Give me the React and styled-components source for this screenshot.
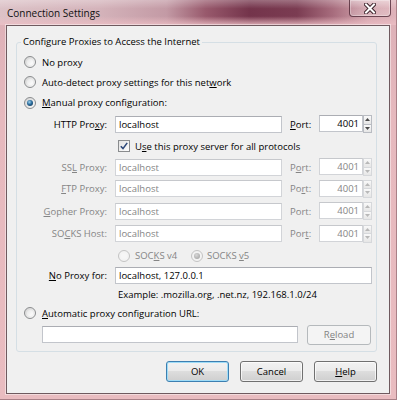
import React from 'react';
import styled, { createGlobalStyle } from 'styled-components';

const Global = createGlobalStyle`
  html, body { margin: 0; padding: 0; background: #fff; }
  body { font-family: "Open Sans", "Noto Sans", sans-serif; font-size: 9.5px; color: #000; }
`;

const Window = styled.div`
  width: 397px;
  height: 400px;
  box-sizing: border-box;
  display: flex;
  flex-direction: column;
  padding: 0 6px 5px 6px;
  background: linear-gradient(180deg, #dcb0b7 0%, #e6b9be 30%, #e9bcc0 100%);
  border-right: 1px solid #a98087;
  border-bottom: 1px solid #a98087;
`;

const TitleBar = styled.div`
  height: 25px;
  margin: 0 -6px;
  padding: 0 5px 0 7px;
  display: flex;
  align-items: flex-start;
  background:
    linear-gradient(180deg, rgba(255,255,255,.28) 0%, rgba(255,255,255,0) 35%, rgba(255,255,255,0) 65%, rgba(236,190,196,.85) 100%),
    linear-gradient(90deg, #dcc2c7 0%, #d4b3ba 25%, #c39aa5 42%, #98596c 52%, #74344b 63%, #7b3c52 75%, #a76c7d 84%, #d4a6af 93%, #dfb3ba 100%);
`;

const Title = styled.div`
  font-size: 10px;
  line-height: 14px;
  padding-top: 6px;
  color: #111;
`;

const CloseButton = styled.div`
  margin-left: auto;
  width: 42px;
  height: 17px;
  box-sizing: border-box;
  border: 1px solid rgba(70, 30, 45, .75);
  border-top: none;
  border-radius: 0 0 4px 4px;
  background: linear-gradient(180deg, rgba(255,255,255,.25), rgba(255,255,255,.08) 50%, rgba(255,255,255,.18));
  box-shadow: inset 0 0 0 1px rgba(255,255,255,.3);
  display: flex;
  align-items: center;
  justify-content: center;
`;

const Client = styled.div`
  flex: 1;
  background: #f0f0f0;
  border: 1px solid #6f5a5f;
  box-shadow: 0 0 0 1px rgba(255,255,255,.45);
  padding-top: 9px;
  display: flex;
  flex-direction: column;
`;

const Group = styled.fieldset`
  margin: 0 12px 0 9px;
  padding: 0;
  border: 1px solid #d5dfe5;
  border-radius: 3px;
  min-width: 0;
`;

const Legend = styled.legend`
  margin-left: 4px;
  padding: 0 2px;
  height: 14px;
  line-height: 14px;
`;

const Body = styled.div`
  display: grid;
  grid-template-rows: 20px 20px 21px 22px 22px 20px 23px 22px 23px 21px 19px 18px 20px 23px;
  padding: 3px 0 5px;
`;

const Line = styled.div`
  display: flex;
  align-items: center;
  padding-left: ${p => p.$indent || 0}px;
  color: ${p => (p.$disabled ? '#858585' : '#000')};
`;

const ProxyRow = styled.div`
  display: grid;
  grid-template-columns: 98px 175px 29px 53px;
  align-items: center;
  color: ${p => (p.$disabled ? '#858585' : '#000')};
`;

const Label = styled.span`
  text-align: right;
  padding-right: 8px;
  white-space: nowrap;
`;

const PortLabel = styled.span`
  white-space: nowrap;
`;

const Field = styled.div`
  box-sizing: border-box;
  height: 17px;
  width: ${p => p.$width}px;
  border: 1px solid ${p => (p.$disabled ? '#d2d4d8' : '#c2c5cb')};
  border-top-color: ${p => (p.$disabled ? '#c6c8cc' : '#abadb3')};
  background: #fff;
  color: ${p => (p.$disabled ? '#858585' : '#000')};
  padding: 0 3px;
  line-height: 15px;
  white-space: nowrap;
  overflow: hidden;
  text-align: ${p => (p.$right ? 'right' : 'left')};
  grid-column: ${p => p.$span || 'auto'};
`;

const PortBox = styled.div`
  display: flex;
  height: 18px;
`;

const Spinner = styled.div`
  width: 9px;
  display: flex;
  flex-direction: column;
`;

const SpinHalf = styled.div`
  flex: 1;
  box-sizing: border-box;
  border: 1px solid ${p => (p.$disabled ? '#d6d8db' : '#b9bcc2')};
  border-top: ${p => (p.$bottom ? 'none' : undefined)};
  background: linear-gradient(180deg, #f9f9f9, #e6e6e6);
  display: flex;
  align-items: center;
  justify-content: center;
`;

const Radio = styled.span`
  position: relative;
  flex: none;
  width: 12px;
  height: 12px;
  box-sizing: border-box;
  border-radius: 50%;
  border: 1px solid ${p => (p.$disabled ? '#c3c3c3' : '#8a8c8e')};
  background: ${p => (p.$disabled ? '#f3f3f3' : 'linear-gradient(135deg, #d4d4d4, #fafafa)')};
  &::after {
    content: '';
    position: absolute;
    inset: 2px;
    border-radius: 50%;
    background: ${p =>
      p.$checked
        ? p.$disabled
          ? 'radial-gradient(circle at 40% 35%, #d8d8d8, #9c9c9c)'
          : 'radial-gradient(circle at 40% 35%, #9fd3ef 0%, #2b6c9c 45%, #0d2a45 100%)'
        : p.$disabled
          ? '#f6f6f6'
          : 'linear-gradient(135deg, #e6e6e6, #ffffff)'};
  }
`;

const RadioText = styled.span`
  margin-left: ${p => p.$gap || 6}px;
  white-space: nowrap;
`;

const Option = styled.span`
  display: flex;
  align-items: center;
  width: ${p => (p.$width ? `${p.$width}px` : 'auto')};
`;

const Check = styled.span`
  flex: none;
  width: 12px;
  height: 12px;
  box-sizing: border-box;
  border: 1px solid #8a8c8e;
  background: linear-gradient(135deg, #e2e2e2, #fdfdfd);
  display: flex;
  align-items: center;
  justify-content: center;
`;

const Cell = styled.div`
  grid-column: ${p => p.$col};
  padding-left: ${p => p.$indent || 0}px;
  display: flex;
  align-items: center;
`;

const UrlRow = styled.div`
  display: flex;
  align-items: center;
  padding-left: 25px;
  gap: 9px;
`;

const Buttons = styled.div`
  display: flex;
  justify-content: flex-end;
  gap: 11px;
  margin-top: 9px;
  padding-right: 12px;
`;

const Button = styled.div`
  width: ${p => p.$width || 63}px;
  height: ${p => p.$height || 21}px;
  box-sizing: border-box;
  border-radius: 3px;
  border: 1px solid ${p => (p.$disabled ? '#b5b9bc' : p.$default ? '#3c7fb1' : '#707070')};
  background: ${p =>
    p.$disabled
      ? '#f4f4f4'
      : 'linear-gradient(180deg, #f2f2f2 0%, #ebebeb 45%, #dddddd 50%, #cfcfcf 100%)'};
  box-shadow: inset 0 0 0 1px ${p => (p.$disabled ? 'transparent' : p.$default ? '#9fdcf7' : 'rgba(255,255,255,.7)')};
  color: ${p => (p.$disabled ? '#838383' : '#000')};
  display: flex;
  align-items: center;
  justify-content: center;
`;

const Key = styled.span`
  text-decoration: underline;
  text-underline-offset: 1px;
`;

function CloseIcon() {
  return (
    <svg width="12" height="11" viewBox="0 0 12 11">
      <path d="M2 1.5 L10 9.5 M10 1.5 L2 9.5" stroke="#3b2129" strokeWidth="4" strokeLinecap="square" />
      <path d="M2 1.5 L10 9.5 M10 1.5 L2 9.5" stroke="#ffffff" strokeWidth="2" strokeLinecap="square" />
    </svg>
  );
}

function CheckMark() {
  return (
    <svg width="8" height="8" viewBox="0 0 8 8">
      <path d="M0.8 4.2 L3 6.6 L7.2 0.9" fill="none" stroke="#2c4779" strokeWidth="1.6" />
    </svg>
  );
}

function Arrow({ up, disabled }) {
  return (
    <svg width="5" height="3" viewBox="0 0 5 3">
      <path d={up ? 'M0 3 L2.5 0 L5 3 Z' : 'M0 0 L5 0 L2.5 3 Z'} fill={disabled ? '#b8b8b8' : '#4a4a4a'} />
    </svg>
  );
}

function Port({ disabled }) {
  return (
    <PortBox>
      <Field $width={44} $right $disabled={disabled}>4001</Field>
      <Spinner>
        <SpinHalf $disabled={disabled}><Arrow up disabled={disabled} /></SpinHalf>
        <SpinHalf $bottom $disabled={disabled}><Arrow disabled={disabled} /></SpinHalf>
      </Spinner>
    </PortBox>
  );
}

function Proxy({ label, port, disabled }) {
  return (
    <ProxyRow $disabled={disabled}>
      <Label>{label}</Label>
      <Field $width={167} $disabled={disabled}>localhost</Field>
      <PortLabel>{port}</PortLabel>
      <Port disabled={disabled} />
    </ProxyRow>
  );
}

export default function App() {
  return (
    <>
      <Global />
      <Window>
        <TitleBar>
          <Title>Connection Settings</Title>
          <CloseButton><CloseIcon /></CloseButton>
        </TitleBar>
        <Client>
          <Group>
            <Legend>Configure Proxies to Access the Internet</Legend>
            <Body>
              <Line $indent={7}><Radio /><RadioText>No proxy</RadioText></Line>
              <Line $indent={7}><Radio /><RadioText>Auto-detect proxy settings for this net<Key>w</Key>ork</RadioText></Line>
              <Line $indent={7}><Radio $checked /><RadioText><Key>M</Key>anual proxy configuration:</RadioText></Line>
              <Proxy label={<>HTTP Pro<Key>x</Key>y:</>} port={<><Key>P</Key>ort:</>} />
              <ProxyRow>
                <Cell $col="2 / 5" $indent={3}>
                  <Check><CheckMark /></Check>
                  <RadioText $gap={5}>U<Key>s</Key>e this proxy server for all protocols</RadioText>
                </Cell>
              </ProxyRow>
              <Proxy disabled label={<>SS<Key>L</Key> Proxy:</>} port={<>P<Key>o</Key>rt:</>} />
              <Proxy disabled label={<><Key>F</Key>TP Proxy:</>} port={<>Po<Key>r</Key>t:</>} />
              <Proxy disabled label={<><Key>G</Key>opher Proxy:</>} port="Port:" />
              <Proxy disabled label={<>SO<Key>C</Key>KS Host:</>} port={<>Por<Key>t</Key>:</>} />
              <ProxyRow $disabled>
                <Cell $col="2 / 5" $indent={3}>
                  <Option $width={73}><Radio $disabled /><RadioText $gap={5}>SOC<Key>K</Key>S v4</RadioText></Option>
                  <Option><Radio $disabled $checked /><RadioText $gap={4}>SOCKS <Key>v</Key>5</RadioText></Option>
                </Cell>
              </ProxyRow>
              <ProxyRow>
                <Label><Key>N</Key>o Proxy for:</Label>
                <Field $span="2 / 5" $width={257}>localhost, 127.0.0.1</Field>
              </ProxyRow>
              <ProxyRow>
                <Cell $col="2 / 5" $indent={3}>Example: .mozilla.org, .net.nz, 192.168.1.0/24</Cell>
              </ProxyRow>
              <Line $indent={7}><Radio /><RadioText><Key>A</Key>utomatic proxy configuration URL:</RadioText></Line>
              <UrlRow>
                <Field $width={256} />
                <Button $disabled $width={64} $height={20}>R<Key>e</Key>load</Button>
              </UrlRow>
            </Body>
          </Group>
          <Buttons>
            <Button $default>OK</Button>
            <Button>Cancel</Button>
            <Button><Key>H</Key>elp</Button>
          </Buttons>
        </Client>
      </Window>
    </>
  );
}
